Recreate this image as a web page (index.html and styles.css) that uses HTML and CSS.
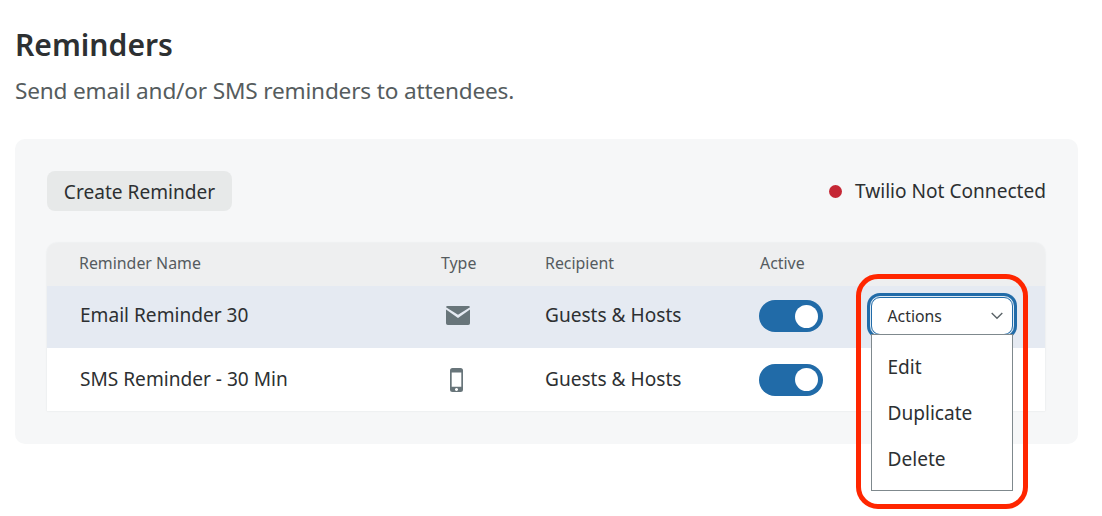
FILE: index.html
```html
<!DOCTYPE html>
<html lang="en">

<head>
    <meta charset="UTF-8">
    <meta name="viewport" content="width=device-width, initial-scale=1.0">
    <title>Reminders</title>
    <link rel="stylesheet" href="styles.css">
</head>

<body>
    <div class="container">
        <h1>Reminders</h1>
        <p class="intro">Send email and/or SMS reminders to attendees.</p>
        <div class="panel">
            <div class="toolbar">
                <button type="button" class="create">Create Reminder</button>
                <div class="status"><span class="dot"></span>Twilio Not Connected</div>
            </div>
            <div class="table">
                <div class="row head">
                    <span>Reminder Name</span>
                    <span>Type</span>
                    <span>Recipient</span>
                    <span>Active</span>
                </div>
                <div class="row selected">
                    <span class="text">Email Reminder 30</span>
                    <span class="type">
                        <svg class="mail" width="24" height="19" viewBox="0 0 24 19">
                            <path fill="#68757a" d="M1.500 0h21q1.300 0 1.500 1.300L12 8.800 0 1.300Q.2 0 1.500 0zM0 3.400L12 12l12-8.600v13.800q0 1.800-1.800 1.800H1.800Q0 19 0 17.200z" />
                        </svg>
                    </span>
                    <span class="text">Guests &amp; Hosts</span>
                    <span class="toggle"><span class="knob"></span></span>
                    <div class="actions">
                        <div class="select">
                            <span>Actions</span>
                            <svg width="12" height="8" viewBox="0 0 12 8">
                                <path fill="none" stroke="#5b6468" stroke-width="1.4" d="M.7 1l5.300 5.300L11.300 1" />
                            </svg>
                        </div>
                        <ul class="menu">
                            <li>Edit</li>
                            <li>Duplicate</li>
                            <li>Delete</li>
                        </ul>
                        <div class="outline"></div>
                    </div>
                </div>
                <div class="row">
                    <span class="text">SMS Reminder - 30 Min</span>
                    <span class="type">
                        <svg class="phone" width="13" height="24" viewBox="0 0 13 24">
                            <path fill="#68757a" fill-rule="evenodd" d="M2.500 0h8Q13 0 13 2.500v19q0 2.500-2.500 2.500h-8Q0 24 0 21.500v-19Q0 0 2.500 0zM1.700 4.500v14.300h9.600v-14.300zM6.500 19.900a1.500 1.500 0 1 0 .01 0z" />
                        </svg>
                    </span>
                    <span class="text">Guests &amp; Hosts</span>
                    <span class="toggle"><span class="knob"></span></span>
                </div>
            </div>
        </div>
    </div>
</body>

</html>
```
FILE: styles.css
```css
* {
    margin: 0;
    padding: 0;
    box-sizing: border-box;
}

body {
    min-height: 516px;
    background: #fff;
    color: #2d3032;
    font-family: "Noto Sans", "Open Sans", sans-serif;
    font-size: 19.1px;
}

.container {
    width: 1063px;
    margin-left: 15px;
    padding-top: 24px;
}

h1 {
    font-size: 30.1px;
    font-weight: 600;
    line-height: 42px;
}

.intro {
    margin-top: 9px;
    color: #555c5e;
    font-size: 22.6px;
    line-height: 32px;
    letter-spacing: -0.17px;
}

.panel {
    height: 305px;
    margin-top: 32px;
    padding: 32px 32px 0 32px;
    background: #f6f7f8;
    border-radius: 10px;
}

.toolbar {
    display: flex;
    justify-content: space-between;
    align-items: center;
    height: 40px;
}

.create {
    width: 185px;
    height: 40px;
    padding-top: 2px;
    border: none;
    border-radius: 8px;
    background: #e7e9e9;
    color: inherit;
    font: inherit;
}

.status {
    display: flex;
    align-items: center;
}

.dot {
    width: 13px;
    height: 13px;
    margin-right: 13px;
    border-radius: 50%;
    background: #c52735;
}

.table {
    width: 998px;
    margin-top: 32px;
    border-radius: 10px 10px 0 0;
    box-shadow: 0 0 2px rgba(60, 70, 80, 0.12);
}

.row {
    display: grid;
    grid-template-columns: 361px 104px 214px 108px 150px;
    align-items: center;
    height: 63px;
    padding-left: 33px;
    background: #fff;
}

.head {
    grid-template-columns: 362px 104px 215px 108px;
    height: 43px;
    padding: 0 0 3px 32px;
    border-radius: 10px 10px 0 0;
    background: #eeeff0;
    color: #555b5f;
    font-size: 15.9px;
}

.selected {
    height: 62px;
    padding-bottom: 2px;
    background: #e5eaf2;
}

.text {
    padding-bottom: 2px;
}

.type {
    display: flex;
    padding-left: 5px;
}

.mail {
    margin-bottom: 1px;
}

.phone {
    margin-left: 4px;
}

.toggle {
    display: flex;
    align-items: center;
    justify-content: flex-end;
    width: 64px;
    height: 32px;
    padding-right: 5px;
    border-radius: 16px;
    background: #216ba8;
}

.knob {
    width: 23px;
    height: 23px;
    border-radius: 50%;
    background: #fff;
}

.actions {
    position: relative;
}

.select {
    display: flex;
    justify-content: space-between;
    align-items: center;
    width: 142px;
    height: 38px;
    margin-left: 4px;
    padding: 0 9px 0 15.500px;
    border: 1px solid #216ba8;
    border-radius: 9px;
    background: #fff;
    box-shadow: 0 0 0 1px #dfeaf4, 0 0 0 4px #216ba8;
    font-size: 15.8px;
}

.menu {
    position: absolute;
    top: 37px;
    left: 4px;
    width: 142px;
    height: 157px;
    padding: 9px 0 0 15.500px;
    border: 1px solid #7f898d;
    background: #fff;
    list-style: none;
    line-height: 46px;
}

.outline {
    position: absolute;
    top: -23px;
    left: -11px;
    width: 172px;
    height: 235px;
    border: 5px solid #ff2600;
    border-radius: 22px;
}
```
